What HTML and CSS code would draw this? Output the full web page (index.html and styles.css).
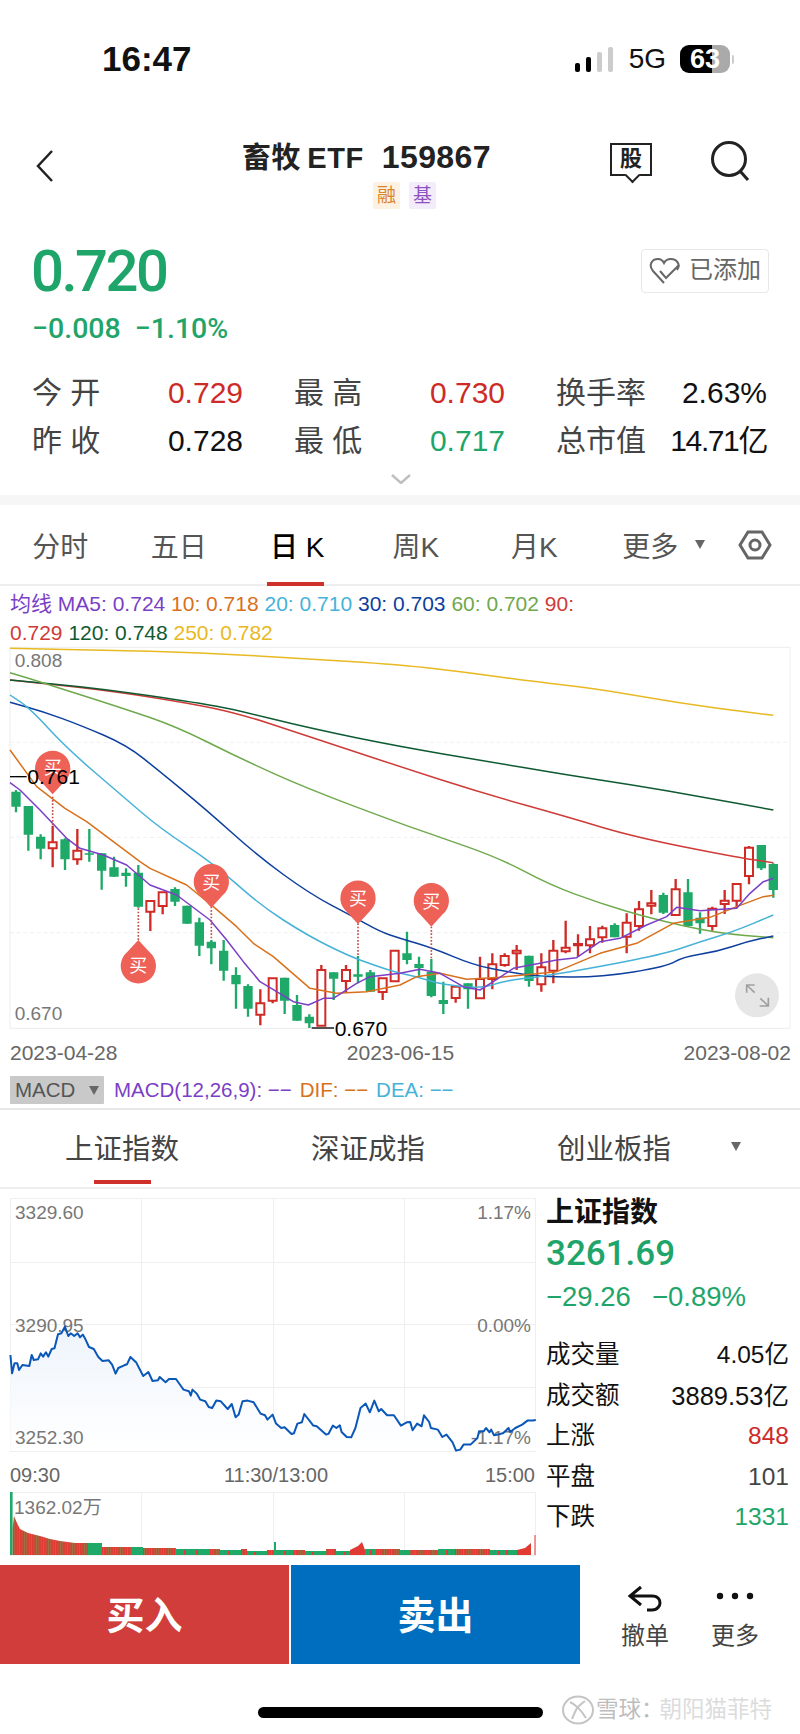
FILE: index.html
```html
<!DOCTYPE html>
<html lang="zh">
<head>
<meta charset="utf-8">
<title>畜牧ETF 159867</title>
<link rel="stylesheet" href="styles.css">
</head>
<body>
<div class="page">
  <header class="status">
    <span class="clock">16:47</span>
    <div class="status-right">
      <div class="signal"><i class="on h1"></i><i class="on h2"></i><i class="h3"></i><i class="h4"></i></div>
      <span class="net">5G</span>
      <div class="battery"><span>63</span></div><i class="nub"></i>
    </div>
  </header>

  <nav class="nav">
    <svg class="back" width="18" height="34" viewBox="0 0 18 34"><path d="M16 2 2 17l14 15" class="ico"/></svg>
    <div class="title-block">
      <div class="title">畜牧<span class="etf">ETF</span><span class="code">159867</span></div>
      <div class="tags"><span class="tag rong">融</span><span class="tag ji">基</span></div>
    </div>
    <div class="nav-icons">
      <div class="gu-box"><span>股</span></div>
      <svg width="42" height="42" viewBox="0 0 42 42"><circle cx="19" cy="19" r="16.5" class="ico w3"/><path d="m30 31 8 9" class="ico w3"/></svg>
    </div>
  </nav>

  <section class="quote">
    <div class="quote-top">
      <div class="price">0.720</div>
      <div class="added">
        <svg width="32" height="30" viewBox="0 0 32 30"><path d="M15 27 4 15C-1 9 3 3 9 3c3 0 5 2 6 4 1-2 4-4 7-4 6 0 10 6 6 11" class="ico grey"/><path d="m11 15 6 7L30 9" class="ico grey"/></svg>
        <span>已添加</span>
      </div>
    </div>
    <div class="change"><span>−0.008</span><span>−1.10%</span></div>
    <div class="stats">
      <div class="stat"><span class="lab">今 开</span><span class="red">0.729</span></div>
      <div class="stat"><span class="lab">最 高</span><span class="red">0.730</span></div>
      <div class="stat"><span class="lab">换手率</span><span>2.63%</span></div>
      <div class="stat"><span class="lab">昨 收</span><span>0.728</span></div>
      <div class="stat"><span class="lab">最 低</span><span class="green">0.717</span></div>
      <div class="stat"><span class="lab">总市值</span><span class="tight">14.71亿</span></div>
    </div>
    <svg class="more-chev" width="20" height="10" viewBox="0 0 20 10"><path d="m1 1 9 8 9-8" class="ico chev"/></svg>
  </section>
  <div class="band"></div>

  <div class="ktabs">
    <span class="ktab">分时</span>
    <span class="ktab">五日</span>
    <span class="ktab active">日 K</span>
    <span class="ktab">周K</span>
    <span class="ktab">月K</span>
    <span class="ktab more">更多<i class="tri"></i></span>
    <svg class="hex" width="34" height="30" viewBox="0 0 34 30"><path d="M10 2h14l8 13-8 13H10L2 15z" class="ico hexs"/><circle cx="17" cy="15" r="5" class="ico hexs"/></svg>
  </div>

  <p class="legend"><span class="c5">均线 MA5: 0.724</span> <span class="c10">10: 0.718</span> <span class="c20">20: 0.710</span> <span class="c30">30: 0.703</span> <span class="c60">60: 0.702</span> <span class="c90">90:</span><br><span class="c90">0.729</span> <span class="c120">120: 0.748</span> <span class="c250">250: 0.782</span></p>

  <svg class="kchart" width="800" height="395" viewBox="0 18 2400 1185">
    <rect x="30" y="22" width="2340" height="1143" class="frame"/>
    <path d="M30 307H2370M30 592H2370M30 878H2370" class="dash"/>
    <text x="44" y="82" class="axis">0.808</text>
    <text x="44" y="1140" class="axis">0.670</text>

    <path class="gw" d="M48 450V517M85 498V632M122 583V658M195 595V690M268 567V665M305 640V749M342 650V710M378 685V740M415 675V803M525 742V798M561 797V851M598 833V948M634 900V973M671 900V1022M708 982V1106M744 1033V1130M854 1013V1122M891 1065V1142M928 1123V1164M1001 997V1080M1074 948V1030M1111 990V1055M1221 875V973M1257 950V1007M1294 957V1072M1330 1025V1122M1404 1030V1106M1587 947V1040M1844 850V892M1990 758V822M2064 717V860M2100 817V881M2284 615V690M2320 670V773"/>
    <path class="gb" d="M48 455V500M85 498V584M122 590V626M195 598V658M268 640V644M305 640V692M342 682V710M378 698V708M415 698V800M525 747V785M561 797V851M598 847V917M634 905V925M671 932V992M708 1005V1033M744 1038V1106M854 1013V1082M891 1095V1142M928 1130V1150M1001 997V1016M1074 1003V1010M1111 997V1055M1221 940V960M1257 972V984M1294 995V1068M1330 1080V1092M1404 1030V1048M1587 947V1023M1844 855V892M1990 765V818M2064 757V858M2100 833V850M2284 615V685M2320 672V750"/>
    <path class="rw" d="M158 557V682M232 567V674M451 783V873M488 757V823M781 1048V1156M818 1015V1090M964 975V1157M1038 975V1058M1148 1015V1080M1184 930V1024M1367 1040V1088M1440 950V1075M1477 940V1048M1514 940V980M1550 915V990M1624 940V1055M1660 900V1030M1697 842V940M1734 883V950M1770 858V940M1807 857V908M1880 820V940M1917 783V872M1954 750V823M2027 717V825M2137 800V872M2174 750V822M2210 732V805M2247 618V733"/>
    <path class="rb" d="M146 607h24v18h-24zM220 632h24v26h-24zM439 783h24v32h-24zM476 757h24v41h-24zM769 1090h24v34h-24zM806 1015h24v67h-24zM952 990h24v167h-24zM1026 990h24v33h-24zM1136 1015h24v41h-24zM1172 932h24v92h-24zM1355 1040h24v34h-24zM1428 1017h24v58h-24zM1465 973h24v44h-24zM1502 948h24v27h-24zM1538 932h24v8h-24zM1612 982h24v51h-24zM1648 932h24v60h-24zM1685 923h24v11h-24zM1722 912h24v4h-24zM1758 898h24v18h-24zM1795 865h24v27h-24zM1868 848h24v42h-24zM1905 808h24v50h-24zM1942 790h24v7h-24zM2015 748h24v77h-24zM2125 806h24v52h-24zM2162 782h24v10h-24zM2198 732h24v50h-24zM2235 623h24v85h-24z"/>

    <path class="ma m250" d="M30 25L165 27.500Q300 30 450 34Q600 38 750 46.500Q900 55 1050 64.500Q1200 74 1300 85.500Q1400 97 1500 111Q1600 125 1685 134Q1770 143 1885 162.500Q2000 182 2075 193.500Q2150 205 2235 215.500L2320 226"/>
    <path class="ma m90" d="M30 120L165 134Q300 148 410 165Q520 182 610 198.500Q700 215 815 252.500Q930 290 1065 335Q1200 380 1325 420Q1450 460 1575 495Q1700 530 1800 560Q1900 590 2050 620Q2200 650 2260 659L2320 668"/>
    <path class="ma m120" d="M30 120L165 132.500Q300 145 450 167.500Q600 190 650 199Q700 208 815 236.500Q930 265 1065 292.500Q1200 320 1325 341Q1450 362 1575 383.500Q1700 405 1800 420Q1900 435 2000 452.500Q2100 470 2210 490L2320 510"/>
    <path class="ma m60" d="M30 98L90 116.500Q150 135 260 170Q370 205 450 232.500Q530 260 625 307.500Q720 355 820 400Q920 445 1060 497.500Q1200 550 1250 567.500Q1300 585 1400 620Q1500 655 1575 695Q1650 735 1725 762.500Q1800 790 1875 812.500Q1950 835 2050 857.500Q2150 880 2235 886.500L2320 893"/>
    <path class="ma m30" d="M30 187L80 201Q130 215 185 235Q240 255 310 285Q380 315 430 355Q480 395 550 452.500Q620 510 695 577.500Q770 645 850 703.500Q930 762 995 796Q1060 830 1100 852.500Q1140 875 1170 885Q1200 895 1250 910Q1300 925 1360 950Q1420 975 1470 985Q1520 995 1570 1002.500Q1620 1010 1710 1011Q1800 1012 1900 996Q2000 980 2025 965Q2050 950 2100 942.500Q2150 935 2195 920Q2240 905 2280 896.500L2320 888"/>
    <path class="ma m20" d="M30 165L60 185Q90 205 145 265Q200 325 285 397.500Q370 470 425 517.500Q480 565 560 617.500Q640 670 710 732.500Q780 795 850 840Q920 885 980 915Q1040 945 1080 960Q1120 975 1160 987.500Q1200 1000 1225 1005Q1250 1010 1290 1022.500Q1330 1035 1390 1040Q1450 1045 1480 1034Q1510 1023 1565 1016.500Q1620 1010 1710 995Q1800 980 1900 960Q2000 940 2050 922.500Q2100 905 2150 890Q2200 875 2260 850L2320 825"/>
    <polyline class="ma m10" points="30,330 110,440 195,505 260,545 420,665 450,685 560,735 640,800 710,860 760,910 820,950 930,1045 1010,1060 1100,1055 1200,1035 1250,1010 1320,1000 1400,1018 1500,1012 1570,1005 1670,995 1800,940 1910,910 2020,850 2130,832 2210,800 2290,770 2320,766"/>
    <polyline class="ma m5" points="30,428 60,450 120,510 200,595 240,625 310,645 380,675 450,735 530,765 630,840 680,900 730,965 780,1025 880,1085 925,1095 970,1075 1000,1075 1070,1030 1110,1010 1200,1000 1260,988 1320,1000 1390,1040 1440,1050 1480,1025 1540,985 1620,970 1670,960 1730,953 1800,905 1860,895 1940,855 2000,830 2030,802 2100,812 2210,805 2250,760 2290,725 2320,715"/>

    <path class="dots" d="M158 470V557M415 805V905M634 800V900M1074 850V950M1294 860V957"/>
    <path class="pin" d="M158 463 124 426a53 53 0 1 1 68 0z"/>
    <path class="pin" d="M634 803 600 766a53 53 0 1 1 68 0z"/>
    <path class="pin" d="M1074 852 1040 815a53 53 0 1 1 68 0z"/>
    <path class="pin" d="M1294 860 1260 823a53 53 0 1 1 68 0z"/>
    <path class="pin" d="M415 900 449 937a53 53 0 1 1 -68 0z"/>
    <text x="158" y="402" class="pint">买</text>
    <text x="634" y="746" class="pint">买</text>
    <text x="1074" y="796" class="pint">买</text>
    <text x="1294" y="804" class="pint">买</text>
    <text x="415" y="996" class="pint">买</text>

    <path d="M30 410H80" class="cal"/>
    <text x="82" y="432" class="calt">0.761</text>
    <path d="M935 1164H1002" class="cal"/>
    <text x="1004" y="1188" class="calt">0.670</text>

    <circle cx="2271" cy="1066" r="66" class="exp"/>
    <path d="M2240 1035 2264 1058M2240 1058V1035H2264M2305 1098 2281 1075M2305 1073V1098H2279" class="expa"/>
  </svg>

  <div class="dates"><span>2023-04-28</span><span>2023-06-15</span><span>2023-08-02</span></div>

  <div class="macd">
    <div class="macd-box">MACD<i class="tri dark"></i></div>
    <span class="c5">MACD(12,26,9): −−</span>
    <span class="c10">DIF: −−</span>
    <span class="c20">DEA: −−</span>
  </div>

  <div class="itabs">
    <span class="itab active">上证指数</span>
    <span class="itab">深证成指</span>
    <span class="itab">创业板指</span>
    <i class="tri idx"></i>
  </div>

  <section class="index">
    <svg class="ichart" width="540" height="370" viewBox="0 0 540 370">
      <defs>
        <linearGradient id="fillg" x1="0" y1="0" x2="0" y2="1"><stop offset="0" stop-color="#eef4fc"/><stop offset="1" stop-color="#ffffff"/></linearGradient>
        <pattern id="stripe" width="2.4" height="10" patternUnits="userSpaceOnUse"><rect width="2.4" height="10" fill="#e03a32"/><rect width=".6" height="10" fill="#7f8a4e"/></pattern>
      </defs>
      <rect x="10.500" y="0.500" width="525" height="253" class="grid"/>
      <rect x="10.500" y="294.500" width="525" height="63" class="grid"/>
      <path d="M10 64.500H535M10 126.500H535M10 189.500H535M141.500 0V253M273.500 0V253M404.500 0V253M141.500 294V357M273.500 294V357M404.500 294V357" class="grid"/>
      <g class="lift">
        <polygon class="ifill" points="10.400,57 12.100,75.300 14.500,65.300 17.300,65.300 19,72 22.400,67 29.300,68 31.700,57 33.800,62 38,61.300 40.700,55.300 43.100,58.600 45.900,54.300 48.300,58.600 51.700,51 54.500,50.300 58,36.300 61.400,35.300 64.900,28.600 68.300,38 70.700,35.300 74.200,38 77.600,35.300 80,39.300 82.800,36.600 85.600,41.600 89,49 93.800,51 98.300,59 102.500,63 108.700,62.300 112.100,66.600 115.600,75.600 118.300,70 124.200,67.300 127,66.300 130.400,59 136.300,64.600 143.200,78 148.400,74 152.500,83 158,82.300 159.700,79 165.600,84.300 169,81 176,81 181.100,88.300 183.500,91.600 189,93.300 190.800,97.600 192.500,91.600 196.700,95.600 200.100,101.600 205.300,103.300 208.700,109 212.200,110 216.300,102.600 220.800,103.300 227.700,111 231.800,106 235.600,119.300 238.700,116.600 242.500,103.300 247.700,102.600 253.600,104.300 260.500,115.600 265,117.300 267.400,121.600 272.600,116.600 276,125.600 281.200,130 284.600,129.300 291.500,136 293.900,135.300 297.400,125.600 301.900,124.300 304.300,116 313.300,127.600 316.700,128.300 326,136.600 328.400,135.900 332.900,127.600 336.400,130 339.800,127.300 341.600,134 346.700,139 351.200,139.300 355.400,130 360.500,110 365.700,105.600 369.800,114.300 374.300,102.600 378.800,113.300 381.200,111 387.100,117.300 393.900,117.300 400.900,127.600 406.700,124.300 410.200,124 412.600,132.300 417.100,125.600 421.600,128.300 424,117.300 429.200,124 430.900,130 437.800,131.600 442.300,139 446.500,136.600 452.600,144.300 456,152.600 460.200,151.600 463.600,146.600 470.500,146.600 477.400,140 479.100,133.300 483.600,133.300 486,130 489.500,134.300 491.200,131.600 494,137.300 498.100,136.600 503.300,135 508.500,130 510.200,134 515.300,130 522.200,126.600 527.400,122.600 532.600,122.600 535.800,122 535.800,153 10.400,153"/>
      </g>
      <text x="15" y="21" class="iaxis">3329.60</text>
      <text x="531" y="21" class="iaxis end">1.17%</text>
      <text x="15" y="134" class="iaxis">3290.95</text>
      <text x="531" y="134" class="iaxis end">0.00%</text>
      <text x="15" y="246" class="iaxis">3252.30</text>
      <text x="531" y="246" class="iaxis end">-1.17%</text>
      <polyline class="iline lift" points="10.400,57 12.100,75.300 14.500,65.300 17.300,65.300 19,72 22.400,67 29.300,68 31.700,57 33.800,62 38,61.300 40.700,55.300 43.100,58.600 45.900,54.300 48.300,58.600 51.700,51 54.500,50.300 58,36.300 61.400,35.300 64.900,28.600 68.300,38 70.700,35.300 74.200,38 77.600,35.300 80,39.300 82.800,36.600 85.600,41.600 89,49 93.800,51 98.300,59 102.500,63 108.700,62.300 112.100,66.600 115.600,75.600 118.300,70 124.200,67.300 127,66.300 130.400,59 136.300,64.600 143.200,78 148.400,74 152.500,83 158,82.300 159.700,79 165.600,84.300 169,81 176,81 181.100,88.300 183.500,91.600 189,93.300 190.800,97.600 192.500,91.600 196.700,95.600 200.100,101.600 205.300,103.300 208.700,109 212.200,110 216.300,102.600 220.800,103.300 227.700,111 231.800,106 235.600,119.300 238.700,116.600 242.500,103.300 247.700,102.600 253.600,104.300 260.500,115.600 265,117.300 267.400,121.600 272.600,116.600 276,125.600 281.200,130 284.600,129.300 291.500,136 293.900,135.300 297.400,125.600 301.900,124.300 304.300,116 313.300,127.600 316.700,128.300 326,136.600 328.400,135.900 332.900,127.600 336.400,130 339.800,127.300 341.600,134 346.700,139 351.200,139.300 355.400,130 360.500,110 365.700,105.600 369.800,114.300 374.300,102.600 378.800,113.300 381.200,111 387.100,117.300 393.900,117.300 400.900,127.600 406.700,124.300 410.200,124 412.600,132.300 417.100,125.600 421.600,128.300 424,117.300 429.200,124 430.900,130 437.800,131.600 442.300,139 446.500,136.600 452.600,144.300 456,152.600 460.200,151.600 463.600,146.600 470.500,146.600 477.400,140 479.100,133.300 483.600,133.300 486,130 489.500,134.300 491.200,131.600 494,137.300 498.100,136.600 503.300,135 508.500,130 510.200,134 515.300,130 522.200,126.600 527.400,122.600 532.600,122.600 535.800,122"/>
      <text x="10" y="284" class="itime">09:30</text>
      <text x="276" y="284" class="itime mid">11:30/13:00</text>
      <text x="535" y="284" class="itime end">15:00</text>
      <path class="vg" d="M10 294h2.600v63H10zM88 345h14v12H88zM131 349h12v8h-12zM176 351h34v6h-34zM220 352h21v5h-21zM247 353h20v4h-20zM274 344h2v13h-2zM276 352h17v5h-17zM305 353h21v4h-21zM336 353h14v4h-14zM365 351h11v6h-11zM400 352h10v5h-10zM438 351h17v6h-17zM490 352h27v5h-27z"/>
      <path class="vs" d="M12.600 331V357H88V345L75 345 60 343 50 341 40 338 28 335 20 331 17 325 14 318z"/>
      <path class="vs" d="M102 357V349H131V357zM143 357V350H176V357zM210 357V351H220V357zM241 357V351H247V357zM267 357V352H274V357zM293 357V352H305V357zM326 357V351H336V357zM376 357V351H400V357zM410 357V352H438V357zM455 357V351H490V357z"/>
      <path class="vr" d="M350 357V352L358 348 362 344 365 352V357zM517 357V352L525 350 531 345V357zM534.500 337h1v20h-1zM184 352h2v5h-2zM196 352h2v5h-2zM228 353h2v4h-2zM254 354h2v3h-2zM284 353h2v4h-2zM312 354h2v3h-2zM344 354h2v3h-2zM370 352h2v5h-2zM446 352h2v5h-2zM498 353h2v4h-2zM506 352h2v5h-2z"/>
      <text x="14" y="316" class="iaxis">1362.02万</text>
    </svg>

    <aside class="iside">
      <div class="iname">上证指数</div>
      <div class="ival">3261.69</div>
      <div class="ichg"><span>−29.26</span><span>−0.89%</span></div>
      <div class="irows">
        <div class="irow"><span>成交量</span><span>4.05亿</span></div>
        <div class="irow"><span>成交额</span><span class="wide">3889.53亿</span></div>
        <div class="irow"><span>上涨</span><span class="red">848</span></div>
        <div class="irow"><span>平盘</span><span class="flat">101</span></div>
        <div class="irow"><span>下跌</span><span class="green">1331</span></div>
      </div>
    </aside>
  </section>

  <footer class="actions">
    <button class="btn buy">买入</button>
    <button class="btn sell">卖出</button>
    <div class="act first">
      <svg width="36" height="28" viewBox="0 0 36 28"><path d="M14 2 3 11l11 9M3 11h22c7 0 8 5 8 7s-2 7-8 7h-5" class="ico blk"/></svg>
      <span>撤单</span>
    </div>
    <div class="act">
      <svg class="dots3" width="38" height="28" viewBox="0 0 38 28"><circle cx="4" cy="11" r="3.200"/><circle cx="19" cy="11" r="3.200"/><circle cx="34" cy="11" r="3.200"/></svg>
      <span>更多</span>
    </div>
  </footer>

  <div class="home-wrap"><div class="home"></div></div>
  <div class="watermark">
    <svg width="34" height="30" viewBox="0 0 34 30"><ellipse cx="17" cy="15" rx="15" ry="13.500" class="wm"/><path d="M9 7c5 2 12 9 16 16M24 6c-4 3-8 6-9 9-2 4-3 7-4 9" class="wm"/></svg>
    <span class="wm1">雪球：</span><span class="wm2">朝阳猫菲特</span>
  </div>
</div>
</body>
</html>
```

FILE: styles.css
```css
* { box-sizing: border-box; }
html, body { margin: 0; padding: 0; background: #fff; }
body { font-family: "Liberation Sans", "Noto Sans CJK SC", sans-serif; color: #111; }
.page { width: 800px; height: 1734px; position: relative; overflow: hidden; background: #fff; }
svg { display: block; }
.red { color: #cc2b28; }
.green { color: #1fa56a; }

/* status bar */
.status { height: 118px; display: flex; align-items: center; justify-content: space-between; padding: 0 66px 0 102px; }
.clock { font-size: 35px; font-weight: 700; color: #111; }
.status-right { display: flex; align-items: center; }
.signal { display: flex; align-items: flex-end; gap: 6px; height: 25px; margin-right: 16px; }
.signal i { width: 5px; background: #ccc; border-radius: 2px; display: block; }
.signal i.on { background: #000; }
.signal .h1 { height: 9px; }
.signal .h2 { height: 15px; }
.signal .h3 { height: 20px; }
.signal .h4 { height: 25px; }
.net { font-size: 28px; color: #111; margin-right: 14px; }
.battery { width: 50px; height: 28px; border-radius: 9px; background: linear-gradient(90deg, #000 0 32px, #aaa 32px); color: #fff; font-size: 27px; font-weight: 700; text-align: center; line-height: 28px; }
.nub { display: block; width: 2px; height: 9px; background: #ccc; margin-left: 2px; border-radius: 0 2px 2px 0; }

/* nav */
.nav { height: 100px; display: flex; align-items: flex-start; padding: 22px 48px 0 36px; }
.back { margin-top: 9px; }
.ico { fill: none; stroke: #222; stroke-width: 2.500; }
.w3 { stroke-width: 3; }
.title-block { margin-left: 188px; width: 250px; }
.title { font-size: 29px; font-weight: 700; line-height: 34px; color: #222; white-space: nowrap; letter-spacing: .6px; }
.etf { margin-left: 6px; }
.code { font-size: 32px; margin-left: 18px; letter-spacing: .4px; }
.tags { display: flex; gap: 9px; margin: 7px 0 0 131px; }
.tag { width: 27px; height: 27px; border-radius: 2px; font-size: 19px; line-height: 27px; text-align: center; }
.rong { background: #fdf1e2; color: #d9862a; }
.ji { background: #f3ecfa; color: #8e52c2; }
.nav-icons { margin-left: auto; display: flex; gap: 58px; align-items: flex-start; }
.gu-box { width: 42px; height: 33px; margin-top: 3px; border: 2.500px solid #222; font-size: 22px; font-weight: 700; text-align: center; line-height: 28px; color: #222; position: relative; background: #fff; }
.gu-box::after { content: ""; position: absolute; left: 15px; bottom: -7px; width: 9px; height: 9px; background: #fff; border-right: 2.500px solid #222; border-bottom: 2.500px solid #222; transform: rotate(45deg); }

/* quote */
.quote { padding: 0 31px 0 32px; height: 277px; display: flex; flex-direction: column; }
.quote-top { display: flex; justify-content: space-between; align-items: center; height: 50px; margin-top: 28px; }
.price { font-family: Roboto, "Liberation Sans", sans-serif; font-weight: 500; font-size: 58px; letter-spacing: -2.500px; color: #1fa56a; line-height: 50px; margin-left: -1px; }
.added { width: 128px; height: 44px; border: 1px solid #e8e8e8; border-radius: 4px; display: flex; align-items: center; gap: 8px; padding-left: 7px; color: #666; font-size: 24px; line-height: 30px; }
.added span { margin-top: -3px; }
.ico.grey { stroke: #666; stroke-width: 2; }
.change { display: flex; gap: 14px; margin-top: 17px; font-family: Roboto, "Liberation Sans", sans-serif; font-weight: 500; font-size: 28.500px; color: #1fa56a; line-height: 32px; }
.stats { display: grid; grid-template-columns: repeat(3, 211px); column-gap: 51px; row-gap: 11px; margin-top: 29px; }
.stat { display: flex; justify-content: space-between; align-items: center; font-size: 30px; line-height: 37px; color: #111; }
.lab { color: #444; font-size: 30px; white-space: pre; }
.tight { letter-spacing: -1.400px; }
.more-chev { margin: 15px auto 0; }
.ico.chev { stroke: #c0c0c0; stroke-width: 2.500; }
.band { height: 10px; background: #f6f6f6; }

/* K tabs */
.ktabs { height: 81px; display: flex; align-items: center; padding-left: 1px; border-bottom: 2px solid #eee; position: relative; font-size: 28px; color: #555; }
.ktab { width: 118.500px; height: 79px; display: flex; justify-content: center; align-items: center; position: relative; white-space: nowrap; flex: none; }
.ktab.active { color: #000; font-weight: 500; }
.ktab.active::after { content: ""; position: absolute; left: 29px; width: 57px; height: 4px; bottom: -2px; background: #d0302c; }
.ktab.more { padding-left: 22px; }
.tri { display: inline-block; width: 0; height: 0; border-left: 5.500px solid transparent; border-right: 5.500px solid transparent; border-top: 9px solid #666; margin-left: 17px; }
.hex { margin-left: 26px; }
.ico.hexs { stroke: #666; stroke-width: 3; }

/* legend */
.legend { margin: 0; padding: 3px 0 0 10px; height: 60px; font-size: 21px; line-height: 29px; white-space: nowrap; }
.c5 { color: #7a3fc6; }
.c10 { color: #d8701c; }
.c20 { color: #47b2d8; }
.c30 { color: #0c3f9e; }
.c60 { color: #6fa94c; }
.c90 { color: #cf3b37; }
.c120 { color: #0f5a33; }
.c250 { color: #e8b922; }

/* kline */
.frame { fill: none; stroke: #eeeeee; stroke-width: 3; }
.dash { fill: none; stroke: #eaeaea; stroke-width: 2; stroke-dasharray: 12 8; }
.axis { font-size: 57px; fill: #777; }
.gw { fill: none; stroke: #1fa968; stroke-width: 7; }
.gb { fill: none; stroke: #1fa968; stroke-width: 28; }
.rw { fill: none; stroke: #cf2a25; stroke-width: 7; }
.rb { fill: #fff; stroke: #cf2a25; stroke-width: 6; }
.ma { fill: none; stroke-width: 4.500; stroke-linejoin: round; }
.m5 { stroke: #7a3fc6; }
.m10 { stroke: #d8701c; }
.m20 { stroke: #47b2d8; }
.m30 { stroke: #0c3f9e; }
.m60 { stroke: #6fa94c; }
.m90 { stroke: #cf3b37; }
.m120 { stroke: #0f5a33; }
.m250 { stroke: #e8b922; }
.dots { fill: none; stroke: #c2504a; stroke-width: 5; stroke-dasharray: 5 5; }
.pin { fill: #ee6157; }
.pint { fill: #fff; font-size: 54px; text-anchor: middle; }
.cal { stroke: #000; stroke-width: 4; fill: none; }
.calt { fill: #000; font-size: 63px; }
.exp { fill: #e6e6e6; }
.expa { fill: none; stroke: #a0a0a0; stroke-width: 5; }

.dates { display: flex; justify-content: space-between; padding: 0 9px 0 10px; height: 28px; font-size: 21px; line-height: 24px; color: #666; }
.macd { display: flex; align-items: center; height: 28px; margin-top: 7px; padding-left: 10px; font-size: 20.500px; gap: 8px; white-space: nowrap; }
.macd-box { width: 94px; height: 28px; background: #c9c9c9; color: #555; font-size: 20.500px; line-height: 28px; padding-left: 5px; margin-right: 2px; border-radius: 1px; display: flex; align-items: center; }
.tri.dark { margin-left: 14px; border-top-color: #666; }

/* index tabs */
.itabs { margin-top: 4px; height: 81px; border-top: 2px solid #e8e8e8; border-bottom: 2px solid #eee; display: flex; align-items: center; font-size: 28.500px; color: #444; position: relative; padding: 0 0 4px 65px; }
.itab { width: 114px; margin-right: 132px; white-space: nowrap; position: relative; }
.itab.active::after { content: ""; position: absolute; left: 29px; width: 57px; height: 4px; top: 54px; background: #d0302c; }
.tri.idx { margin-left: -72px; }

/* index */
.index { display: flex; height: 376px; padding-top: 9px; }
.ichart { flex: none; }
.grid { fill: none; stroke: #efefef; stroke-width: 1; }
.lift { transform: translateY(100px); }
.ifill { fill: url(#fillg); }
.iaxis { font-size: 19px; fill: #777; }
.iaxis.end, .itime.end { text-anchor: end; }
.itime { font-size: 20px; fill: #666; }
.itime.mid { text-anchor: middle; }
.iline { fill: none; stroke: #0b57b8; stroke-width: 2; stroke-linejoin: round; }
.vg { fill: #1fa968; }
.vr { fill: #e03a32; }
.vs { fill: url(#stripe); }
.iside { margin-left: 6px; width: 243px; margin-top: -1px; flex: none; }
.iname { font-size: 28px; font-weight: 700; line-height: 32px; color: #111; }
.ival { font-family: Roboto, "Liberation Sans", sans-serif; font-weight: 500; font-size: 35px; line-height: 42px; margin-top: 4px; color: #1fa56a; }
.ichg { display: flex; gap: 21px; font-size: 27.500px; line-height: 32px; color: #1fa56a; margin-top: 6px; }
.irows { margin-top: 22px; }
.irow { display: flex; justify-content: space-between; font-size: 24.500px; height: 40.500px; line-height: 40px; color: #111; }
.wide { font-size: 25.500px; }
.flat { color: #444; }

/* actions */
.actions { display: flex; height: 99px; }
.btn { flex: none; border: 0; padding: 0 0 4px; width: 289px; height: 99px; color: #fff; font: 700 38px "Liberation Sans", "Noto Sans CJK SC", sans-serif; }
.buy { background: #d03d3a; margin-right: 2px; }
.sell { background: #006ebf; }
.act { flex: none; width: 90px; height: 99px; padding-top: 6px; display: flex; flex-direction: column; align-items: center; justify-content: center; font-size: 24px; color: #444; gap: 8px; line-height: 30px; }
.act.first { margin-left: 20px; }
.ico.blk { stroke: #111; stroke-width: 3; }
.dots3 { fill: #111; }

.home-wrap { padding: 43px 0 0 258px; }
.home { width: 285px; height: 11px; border-radius: 6px; background: #000; }
.watermark { position: absolute; left: 561px; top: 1694px; display: flex; align-items: center; font-size: 22.500px; line-height: 32px; white-space: nowrap; }
.wm { fill: none; stroke: #c4c4c4; stroke-width: 2; }
.wm1 { color: #bdbdbd; margin-left: 1px; }
.wm2 { color: #dcdcdc; margin-left: -4px; }
```
